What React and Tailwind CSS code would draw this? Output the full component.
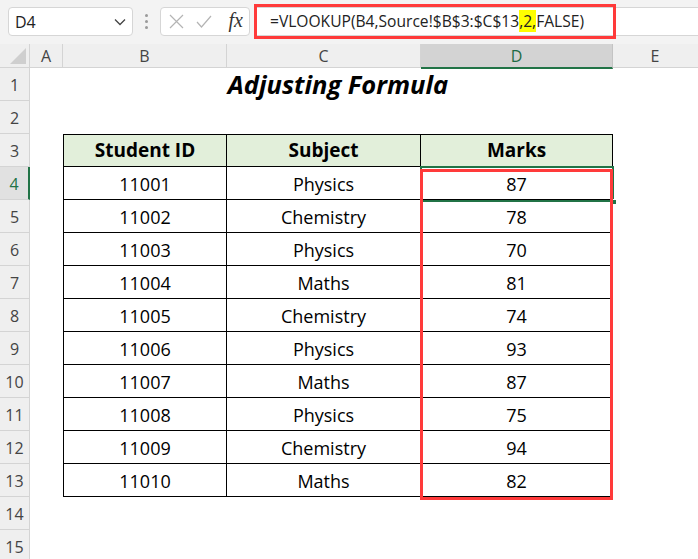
import React from "react";

const COLS = [
  { key: "A", w: "w-[33px]" },
  { key: "B", w: "w-[164px]" },
  { key: "C", w: "w-[194px]" },
  { key: "D", w: "w-[192px]" },
];

const DATA = [
  ["11001", "Physics", "87"],
  ["11002", "Chemistry", "78"],
  ["11003", "Physics", "70"],
  ["11004", "Maths", "81"],
  ["11005", "Chemistry", "74"],
  ["11006", "Physics", "93"],
  ["11007", "Maths", "87"],
  ["11008", "Physics", "75"],
  ["11009", "Chemistry", "94"],
  ["11010", "Maths", "82"],
];

function FormulaBar() {
  return (
    <div className="h-[44px] bg-[#f3f3f3] flex items-start pt-[7px] pl-[8px]">
      {/* name box */}
      <div className="w-[125px] h-[29px] bg-white border border-[#d6d6d6] rounded-[4px] flex items-center pl-[6px] pr-[6px] justify-between">
        <span className="text-[16px] text-[#222]">D4</span>
        <svg width="12" height="8" viewBox="0 0 12 8" fill="none">
          <path d="M1 1.5 L6 6.5 L11 1.5" stroke="#444" strokeWidth="1.3" />
        </svg>
      </div>
      {/* splitter dots */}
      <div className="w-[27px] h-[29px] flex flex-col items-center justify-center gap-[3px]">
        <span className="w-[3px] h-[3px] rounded-full bg-[#9a9a9a]" />
        <span className="w-[3px] h-[3px] rounded-full bg-[#9a9a9a]" />
        <span className="w-[3px] h-[3px] rounded-full bg-[#9a9a9a]" />
      </div>
      {/* cancel / enter / fx */}
      <div className="w-[90px] h-[29px] bg-white border border-[#d6d6d6] rounded-[4px] flex items-center pl-[8px] pr-[6px]">
        <svg width="15" height="15" viewBox="0 0 15 15" fill="none">
          <path d="M1 1 L14 14 M14 1 L1 14" stroke="#b4b4b4" strokeWidth="1.2" />
        </svg>
        <svg className="ml-[12px]" width="16" height="13" viewBox="0 0 16 13" fill="none">
          <path d="M1 7 L5.5 12 L15 1" stroke="#b4b4b4" strokeWidth="1.2" />
        </svg>
        <span className="ml-auto font-['Liberation_Serif',serif] italic text-[20px] leading-none text-[#333] pb-[3px]">
          fx
        </span>
      </div>
      {/* formula input */}
      <div className="relative ml-[4px] flex-1 h-[29px] bg-white border-y border-l border-[#d6d6d6] flex items-center pl-[15px]">
        <span className="text-[15.6px] text-[#222] whitespace-nowrap">
          =VLOOKUP(B4,Source!$B$3:$C$13<span className="bg-[#ffff00]">,2,</span>FALSE)
        </span>
        <div className="absolute left-[-1px] top-[-4px] w-[362px] h-[35px] border-[3px] border-[#ff3a3a]" />
      </div>
    </div>
  );
}

function ColumnHeaders() {
  return (
    <div className="h-[24px] flex bg-[#efefef] border-b border-[#d4d4d4] text-[16px] text-[#444]">
      <div className="w-[30px] h-full border-r border-[#d4d4d4] flex items-end justify-end p-[3px]">
        <svg width="16" height="16" viewBox="0 0 16 16">
          <polygon points="16,0 16,16 0,16" fill="#cfcfcf" />
        </svg>
      </div>
      {COLS.map((c) =>
        c.key === "D" ? (
          <div
            key={c.key}
            className={`${c.w} h-[25px] bg-[#d3d3d3] border-r border-[#c4c4c4] border-b-2 border-b-[#217346] flex items-center justify-center text-[#1e6b45]`}
          >
            {c.key}
          </div>
        ) : (
          <div key={c.key} className={`${c.w} h-full border-r border-[#d4d4d4] flex items-center justify-center`}>
            {c.key}
          </div>
        )
      )}
      <div className="flex-1 h-full flex items-center justify-center pr-[1px]">E</div>
    </div>
  );
}

function RowHeader({ n }) {
  if (n === 4) {
    return (
      <div className="w-[30px] h-full shrink-0 bg-[#e1e1e1] border-b border-[#d4d4d4] border-r-2 border-r-[#217346] flex items-center justify-center pt-[2px] text-[16px] text-[#217346]">
        {n}
      </div>
    );
  }
  return (
    <div className="w-[30px] h-full shrink-0 bg-[#efefef] border-b border-r border-[#d4d4d4] flex items-center justify-center pt-[2px] text-[16px] text-[#444]">
      {n}
    </div>
  );
}

function SheetRow({ n }) {
  const isHead = n === 3;
  const rec = n >= 4 && n <= 13 ? DATA[n - 4] : null;

  let middle;
  if (n === 1) {
    middle = (
      <div className="w-[550px] flex items-center justify-center font-bold italic text-[25.5px] text-black">
        Adjusting Formula
      </div>
    );
  } else if (isHead || rec) {
    const cells = isHead ? ["Student ID", "Subject", "Marks"] : rec;
    const bg = isHead ? "bg-[#e2efda] font-bold text-[19px]" : "bg-white pt-[2px]";
    const top = isHead ? "border-t" : "";
    middle = (
      <>
        <div className={`w-[164px] h-full border-l border-r border-b border-black ${top} ${bg} flex items-center justify-center`}>
          {cells[0]}
        </div>
        <div className={`w-[194px] h-full border-r border-b border-black ${top} ${bg} flex items-center justify-center`}>
          {cells[1]}
        </div>
        <div className={`w-[192px] h-full border-r border-b border-black ${top} ${bg} flex items-center justify-center`}>
          {cells[2]}
        </div>
      </>
    );
  } else {
    middle = <div className="w-[550px]" />;
  }

  return (
    <div className="h-[33px] flex text-[18px] text-black">
      <RowHeader n={n} />
      <div className="w-[33px]" />
      {middle}
      <div className="flex-1" />
    </div>
  );
}

export default function App() {
  const rows = Array.from({ length: 15 }, (_, i) => i + 1);
  return (
    <div className="relative w-[698px] h-[559px] overflow-hidden bg-white font-['Open_Sans',sans-serif]">
      <FormulaBar />
      <ColumnHeaders />
      {rows.map((n) => (
        <SheetRow key={n} n={n} />
      ))}

      {/* active cell D4 */}
      <div className="absolute left-[420px] top-[166px] w-[194px] h-[36px] border-2 border-[#217346]" />
      <div className="absolute left-[611px] top-[199px] w-[6px] h-[6px] bg-[#217346] border border-white" />

      {/* highlight annotation */}
      <div className="absolute left-[420px] top-[169px] w-[193px] h-[331px] border-[3px] border-[#ff3a3a]" />
    </div>
  );
}
